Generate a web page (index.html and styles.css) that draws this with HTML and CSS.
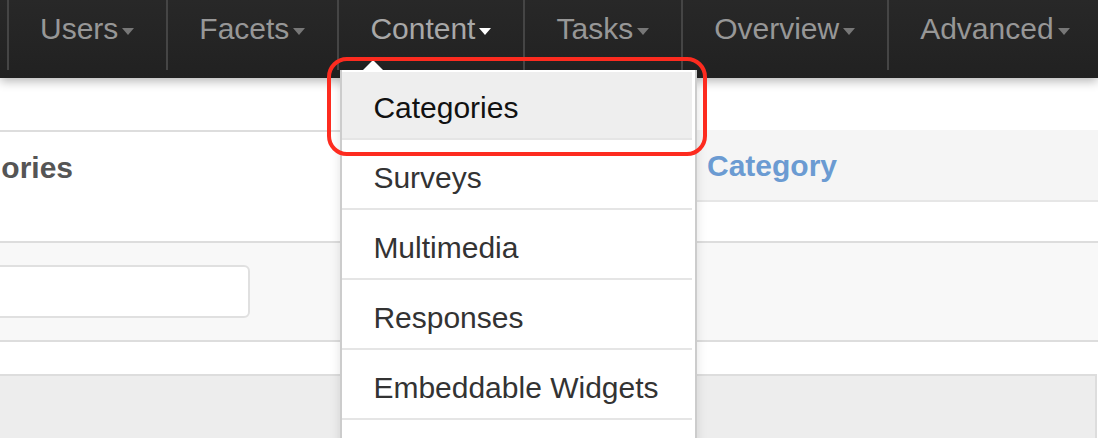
FILE: index.html
```html
<!DOCTYPE html>
<html lang="en">
<head>
<meta charset="utf-8">
<title>Content menu</title>
<link rel="stylesheet" href="styles.css">
</head>
<body>
<header class="navbar">
  <ul class="nav">
    <li class="nav-item"><span class="nav-link">Users<span class="caret"></span></span></li>
    <li class="nav-item"><span class="nav-link">Facets<span class="caret"></span></span></li>
    <li class="nav-item active">
      <span class="nav-link">Content<span class="caret"></span></span>
      <div class="dropdown">
        <a class="dropdown-item selected">Categories</a>
        <a class="dropdown-item">Surveys</a>
        <a class="dropdown-item">Multimedia</a>
        <a class="dropdown-item">Responses</a>
        <a class="dropdown-item">Embeddable Widgets</a>
      </div>
      <div class="highlight"></div>
    </li>
    <li class="nav-item"><span class="nav-link">Tasks<span class="caret"></span></span></li>
    <li class="nav-item"><span class="nav-link">Overview<span class="caret"></span></span></li>
    <li class="nav-item"><span class="nav-link">Advanced<span class="caret"></span></span></li>
  </ul>
</header>
<main class="page">
  <div class="top-gap"></div>
  <div class="columns">
    <section class="col-left">
      <h2 class="page-title">Categories</h2>
    </section>
    <section class="col-right">
      <div class="col-head"><a class="sort-link">Category</a></div>
    </section>
  </div>
  <div class="filter-band">
    <div class="search-input"></div>
  </div>
  <div class="spacer-band"></div>
  <div class="table-box"></div>
</main>
</body>
</html>
```

FILE: styles.css
```css
* {
  box-sizing: border-box;
}

html, body {
  margin: 0;
  padding: 0;
  background: #ffffff;
  overflow: hidden;
}

body {
  font-family: "Liberation Sans", Arial, Helvetica, sans-serif;
  width: 1098px;
  height: 438px;
}

.navbar {
  position: relative;
  z-index: 10;
  height: 78px;
  background: linear-gradient(#282828, #212121);
  box-shadow: 0 3px 10px rgba(0, 0, 0, 0.3);
}

.nav {
  display: flex;
  margin: 0;
  padding: 0 0 0 7px;
  list-style: none;
  white-space: nowrap;
}

.nav-item {
  position: relative;
  flex: none;
  border-left: 2px solid #454545;
  padding: 0 32px 12px 31px;
}

.nav-link {
  display: block;
  font-size: 30px;
  line-height: 58px;
  color: #979797;
}

.caret {
  display: inline-block;
  width: 0;
  height: 0;
  margin-left: 4px;
  vertical-align: middle;
  border-top: 7px solid #777777;
  border-left: 6.5px solid transparent;
  border-right: 6.5px solid transparent;
}

.active .nav-link {
  color: #a8a8a8;
}

.active .caret {
  border-top-color: #ffffff;
}

.dropdown {
  position: absolute;
  z-index: 20;
  top: 70px;
  left: 1px;
  width: 357px;
  padding: 2px 3px 40px 0;
  background: #ffffff;
  border: 2px solid rgba(0, 0, 0, 0.2);
  border-top: 0;
  box-shadow: 0 4px 10px rgba(0, 0, 0, 0.12);
}

.dropdown::before {
  content: "";
  position: absolute;
  top: -10px;
  left: 21px;
  border-bottom: 10px solid #ffffff;
  border-left: 10px solid transparent;
  border-right: 10px solid transparent;
}

.dropdown-item {
  display: block;
  height: 70px;
  padding: 7px 0 0 31px;
  font-size: 30px;
  line-height: 61px;
  color: #333333;
  border-bottom: 2px solid #e5e5e5;
  white-space: nowrap;
}

.dropdown-item.selected {
  height: 68px;
  padding-top: 5px;
  background: #eeeeee;
  color: #111111;
}

.highlight {
  position: absolute;
  z-index: 30;
  top: 57px;
  left: -12px;
  width: 380px;
  height: 99px;
  border: 4px solid #fd2b1f;
  border-radius: 20px;
  pointer-events: none;
}

.page {
  margin-left: -100px;
}

.top-gap {
  height: 52px;
}

.columns {
  display: grid;
  grid-template-columns: 797px 1fr;
}

.col-left {
  border-top: 2px solid #dddddd;
  height: 111px;
  padding: 16px 0 0 18px;
}

.page-title {
  margin: 0;
  font-size: 30px;
  line-height: 40px;
  font-weight: bold;
  color: #555555;
}

.col-right {
  height: 111px;
}

.col-head {
  height: 72px;
  padding: 16px 0 0 10px;
  background: #f5f5f5;
  border-bottom: 2px solid #e6e6e6;
}

.sort-link {
  font-size: 30px;
  line-height: 40px;
  font-weight: bold;
  color: #6b9bd2;
}

.filter-band {
  height: 99px;
  padding-top: 22px;
  background: #f8f8f8;
  border-top: 2px solid #dddddd;
}

.search-input {
  width: 350px;
  height: 53px;
  background: #ffffff;
  border: 2px solid #e0e0e0;
  border-radius: 6px;
}

.spacer-band {
  height: 34px;
  border-top: 2px solid #dddddd;
}

.table-box {
  height: 80px;
  margin-right: 1px;
  background: #ededed;
  border-top: 2px solid #dddddd;
  border-right: 2px solid #dddddd;
}
```
